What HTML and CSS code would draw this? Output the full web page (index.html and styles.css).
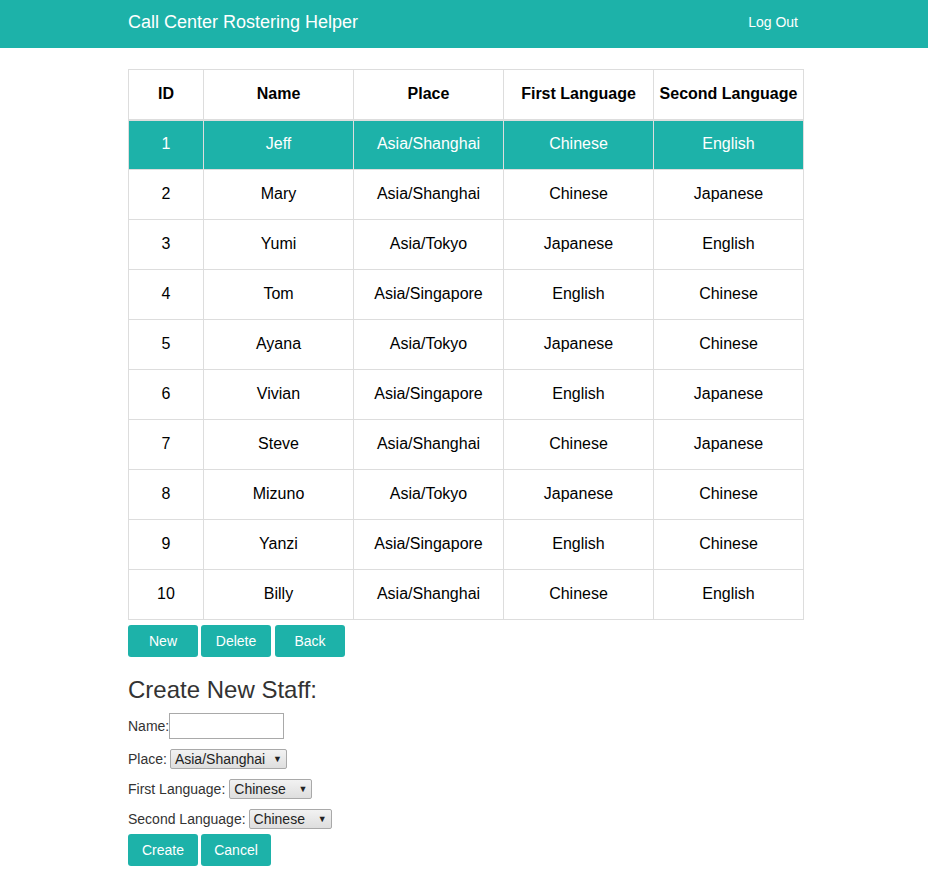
FILE: index.html
```html
<!DOCTYPE html>
<html>
<head>
<meta charset="utf-8">
<link rel="stylesheet" href="styles.css">
</head>
<body>
<header class="navbar">
  <div class="wrap nav-inner">
    <span class="brand">Call Center Rostering Helper</span>
    <a class="logout">Log Out</a>
  </div>
</header>
<main class="wrap">
  <table class="staff">
    <thead>
      <tr><th class="c-id">ID</th><th>Name</th><th>Place</th><th>First Language</th><th>Second Language</th></tr>
    </thead>
    <tbody>
      <tr class="active"><td>1</td><td>Jeff</td><td>Asia/Shanghai</td><td>Chinese</td><td>English</td></tr>
      <tr><td>2</td><td>Mary</td><td>Asia/Shanghai</td><td>Chinese</td><td>Japanese</td></tr>
      <tr><td>3</td><td>Yumi</td><td>Asia/Tokyo</td><td>Japanese</td><td>English</td></tr>
      <tr><td>4</td><td>Tom</td><td>Asia/Singapore</td><td>English</td><td>Chinese</td></tr>
      <tr><td>5</td><td>Ayana</td><td>Asia/Tokyo</td><td>Japanese</td><td>Chinese</td></tr>
      <tr><td>6</td><td>Vivian</td><td>Asia/Singapore</td><td>English</td><td>Japanese</td></tr>
      <tr><td>7</td><td>Steve</td><td>Asia/Shanghai</td><td>Chinese</td><td>Japanese</td></tr>
      <tr><td>8</td><td>Mizuno</td><td>Asia/Tokyo</td><td>Japanese</td><td>Chinese</td></tr>
      <tr><td>9</td><td>Yanzi</td><td>Asia/Singapore</td><td>English</td><td>Chinese</td></tr>
      <tr><td>10</td><td>Billy</td><td>Asia/Shanghai</td><td>Chinese</td><td>English</td></tr>
    </tbody>
  </table>
  <div class="actions">
    <button class="btn">New</button>
    <button class="btn">Delete</button>
    <button class="btn">Back</button>
  </div>
  <h2 class="form-title">Create New Staff:</h2>
  <form class="staff-form">
    <div class="field field-name"><label>Name:</label><input type="text" class="text-input"></div>
    <div class="field"><label>Place:</label>
      <span class="sel sel-place">Asia/Shanghai<span class="arrow">▼</span></span></div>
    <div class="field"><label>First Language:</label>
      <span class="sel sel-lang">Chinese<span class="arrow">▼</span></span></div>
    <div class="field"><label>Second Language:</label>
      <span class="sel sel-lang sel-second">Chinese<span class="arrow">▼</span></span></div>
    <div class="actions2">
      <button type="button" class="btn">Create</button>
      <button type="button" class="btn">Cancel</button>
    </div>
  </form>
</main>
</body>
</html>
```
FILE: styles.css
```css
* { box-sizing: border-box; }
body {
  margin: 0;
  font-family: "Liberation Sans", Arial, sans-serif;
  font-size: 14px;
  color: #333;
  background: #fff;
}
.wrap {
  width: 676px;
  margin-left: 128px;
}
.navbar {
  background: #1db2a9;
  height: 48px;
}
.nav-inner {
  display: flex;
  justify-content: space-between;
  align-items: center;
  height: 48px;
}
.brand {
  color: #fff;
  font-size: 18px;
  padding-bottom: 4px;
}
.logout {
  color: #fff;
  font-size: 14px;
  margin-right: 6px;
  padding-bottom: 5px;
}
main.wrap { padding-top: 21px; }
.staff {
  border-collapse: collapse;
  width: 676px;
  font-size: 16px;
  color: #000;
  table-layout: fixed;
}
.staff th, .staff td {
  border: 1px solid #ddd;
  text-align: center;
  padding: 0;
}
.staff th {
  height: 50px;
  font-weight: bold;
  border-bottom: 2px solid #ddd;
}
.staff th.c-id { width: 75px; }
.staff td {
  height: 50px;
  padding-bottom: 2px;
}
.staff tr.active td {
  background: #1db2a9;
  color: #fff;
}
.actions {
  display: flex;
  gap: 3px;
  margin-top: 5px;
}
.actions .btn:nth-child(3) { margin-left: 1px; }
.btn {
  width: 70px;
  height: 32px;
  border: 0;
  border-radius: 3px;
  background: #1db2a9;
  color: #fff;
  font-family: "Liberation Sans", Arial, sans-serif;
  font-size: 14px;
  padding: 0;
}
.form-title {
  font-size: 24px;
  font-weight: normal;
  margin: 20px 0 10px;
  color: #333;
  line-height: 26px;
}
.field {
  display: flex;
  align-items: center;
  height: 30px;
}
.field-name {
  align-items: flex-start;
  height: 31px;
}
.field-name label { line-height: 26px; }
.field label { color: #333; }
.text-input {
  width: 115px;
  height: 26px;
  border: 1px solid #a9a9a9;
  margin: 0;
}
.sel {
  display: inline-flex;
  align-items: center;
  justify-content: space-between;
  height: 20px;
  border: 1px solid #a9a9a9;
  border-radius: 2px;
  background: linear-gradient(#f2f2f2, #dedede);
  margin-left: 4px;
  padding: 0 4px 0 4px;
  color: #222;
  font-size: 14px;
}
.sel-place { width: 117px; margin-left: 3px; }
.sel-lang { width: 83px; }
.sel-second { margin-left: 3px; }
.arrow { font-size: 9px; color: #222; }
.actions2 {
  display: flex;
  gap: 3px;
  margin-top: 0;
}
```
